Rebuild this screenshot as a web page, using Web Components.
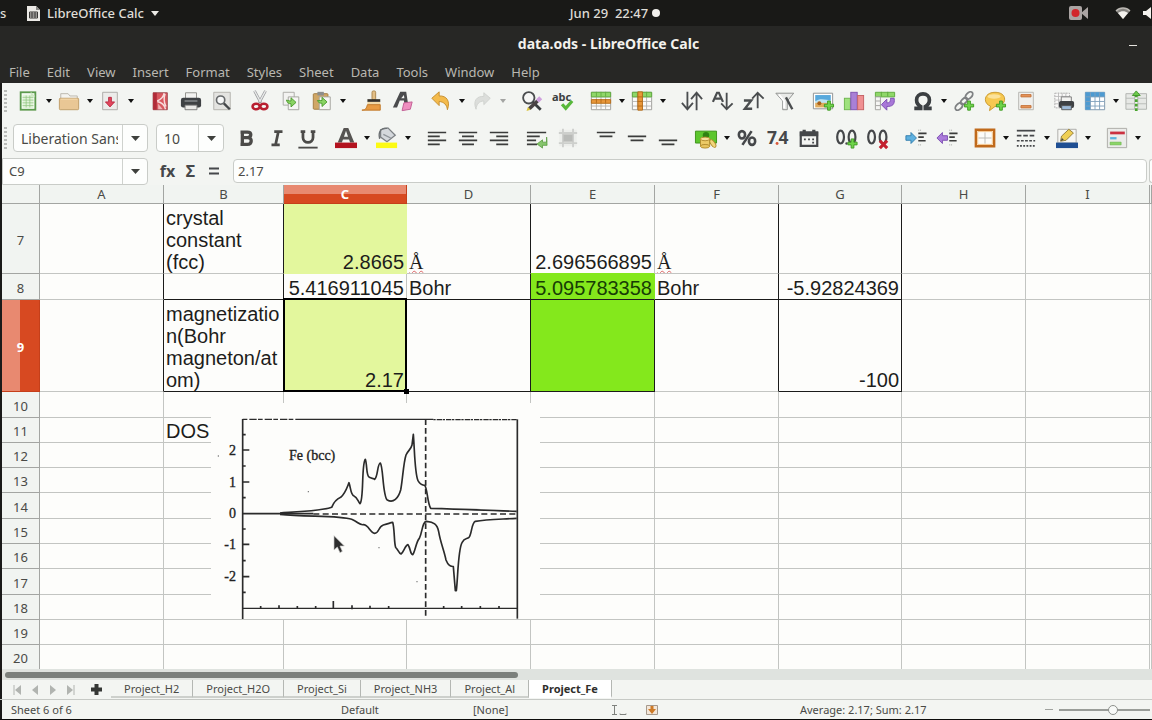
<!DOCTYPE html>
<html lang="en">
<head>
<meta charset="utf-8">
<title>data.ods - LibreOffice Calc</title>
<style>
  html, body { height: 100%; }
  body { margin: 0; overflow: hidden; font-family: "Noto Sans", "Open Sans", sans-serif; font-size: 13px; color: #4a4a46; background: #f3f5f2; }
</style>
</head>
<body>
<calc-window></calc-window>

<script>
/* ---------- icon library, 24 x 24 grid ---------- */
const plus = (x, y) => `<path d="M${x} ${y - 5}h3v3.500h3.500v3h-3.500v3.500h-3v-3.500h-3.500v-3h3.500z" fill="#6fd44a" stroke="#3d9a22"/>`;
const gridLines = (c) => `<path d="M2 7.500h20M2 12.500h20M2 17.500h20M7 2.500v19M12 2.500v19M17 2.500v19" stroke="${c}" fill="none"/>`;
const ICONS = {
  new: `<rect x="4" y="2.500" width="16" height="19" fill="#fff" stroke="#5b9a4c" stroke-width="2"/><rect x="6" y="5" width="12" height="15" fill="#e2f3da"/><path d="M6 8h12M6 11h12M6 14h12M6 17h12M10 6v13M14 6v13" stroke="#8fc47e" stroke-width=".8"/><path d="M15 2l5 5h-5z" fill="#cfe8c6"/>`,
  open: `<path d="M3 4h8l2 2.500h8V19H3z" fill="#f4f4f0" stroke="#b9b5ab"/><rect x="1.500" y="9" width="21" height="12.500" rx="1" fill="#e9c795" stroke="#bd9b66"/><path d="M3 10h18" stroke="#f6dcb0"/>`,
  save: `<path d="M4 2.500h16v19H4z" fill="#ececea" stroke="#aaa9a4"/><path d="M10.500 8h3v5h3.500l-5 5.500L7 13h3.500z" fill="#e2475d" stroke="#b92b42"/>`,
  pdf: `<path d="M4.500 3h15.500v18.500H4.500z" fill="#d9585f" stroke="#9a4a50"/><path d="M4.500 3h4v18.500h-4z" fill="#b02c39"/><path d="M9 12C14 10 16 7 16.500 3.500M9 12.500c5 1 8 4 9 8.500M17.500 4c-2 6-1 10 1 14" fill="none" stroke="#f7dcdc" stroke-width="1.600"/><path d="M10 15l5 6h-5z" fill="#f0b4b7"/>`,
  print: `<path d="M6 3h12v7H6z" fill="#f2f2f0" stroke="#8c8c88"/><rect x="1" y="8.500" width="22" height="10.500" rx="2.500" fill="#3e4144"/><rect x="5" y="11" width="14" height="2" fill="#777b7e"/><path d="M5.500 16.500h13v5h-13z" fill="#e9e9e7" stroke="#777"/>`,
  preview: `<path d="M3 2.500h18v19H3z" fill="#e4e4e1" stroke="#b1b0ab"/><circle cx="10.500" cy="11" r="4.500" fill="#f7f8f8" stroke="#66696b" stroke-width="1.800"/><path d="M14 14.500l6.500 6.500" stroke="#45484a" stroke-width="2.600"/>`,
  cut: `<path d="M6 1l7 13M18 1l-7 13" stroke="#9a9c9e" stroke-width="3"/><path d="M6 1l6.500 12M18 1l-6.500 12" stroke="#e9eaea" stroke-width="1.400"/><ellipse cx="7.800" cy="18" rx="3.900" ry="3" fill="none" stroke="#b81f30" stroke-width="2.800"/><ellipse cx="16.200" cy="18" rx="3.900" ry="3" fill="none" stroke="#b81f30" stroke-width="2.800"/>`,
  copy: `<path d="M3.500 2.500h12v14h-12z" fill="#f3f3f1" stroke="#a9a9a4"/><path d="M9 7.500h11.500v14H9z" fill="#f6f6f4" stroke="#a2a29d"/><path d="M7 11c1 3 2 4 5 4v3.500l5.500-5-5.500-5V12c-3 0-4-1-5-1z" fill="#8ad463" stroke="#4a9a2c"/>`,
  paste: `<rect x="2.500" y="4" width="16" height="17" rx="1" fill="#d0a766" stroke="#a17b3e"/><rect x="7" y="2" width="7" height="4" fill="#8d8e8c"/><path d="M9 7.500h12v14H9z" fill="#f6f6f4" stroke="#a2a29d"/><path d="M7 11.500c1 2 2 3 5 3V18l5.500-5-5.500-5v3.500c-3 0-4 0-5 0z" fill="#8ad463" stroke="#4a9a2c"/>`,
  brush: `<rect x="12" y="1" width="4" height="10" rx="1.500" fill="#e3bf86" stroke="#a8844b"/><path d="M7 10h14v3H7z" fill="#33302b"/><path d="M7 13h14v3H7z" fill="#f0d9a8"/><path d="M7 16h14v6H1c4 0 5-2 6-6z" fill="#e79b43" stroke="#bf7524"/>`,
  clear: `<path d="M1 19L9 2h6.500l2 13h-4l-.500-3.500H8.500L5.500 19zM10 9h3.500L13 5.500z" fill="#4a4b4d"/><path d="M13 14l9-1-2 8-9 1.500z" fill="#ef8fc0" stroke="#bf5b92"/>`,
  undo: `<path d="M2 9l8-7v4.500C18 6 22.500 12 19 21.500 18.500 16 15 13 10 12.500V17z" fill="#f4bb4c" stroke="#c48b2b"/>`,
  redo: `<path d="M21 9l-7-6v4C6 6.500 2 12 5.500 21 6 15.500 9 12 14 12v4z" fill="#dcdedb" stroke="#cfd1ce"/>`,
  find: `<circle cx="8.500" cy="8.500" r="6.200" fill="#f6f7f6" stroke="#4a4d4f" stroke-width="2"/><path d="M13 13l8.500 8.500" stroke="#3a3d3f" stroke-width="3"/><path d="M9 20.500L18 12" stroke="#4a4344" stroke-width="4"/><path d="M18 12l3.500-3.500" stroke="#cfa0dd" stroke-width="4.500"/><path d="M6 23l1.500-4.500 3 3z" fill="#d8c23a"/>`,
  spell: `<text x="0" y="12" font-family="Noto Sans" font-size="12" font-weight="700" fill="#3c3f41">abc</text><path d="M11 15.500l4 4.500 7-8" fill="none" stroke="#58b83a" stroke-width="3.500"/>`,
  row: `<path d="M1.500 2.500h21v19h-21z" fill="#fbfbfa" stroke="#9b9b98"/>${gridLines('#b3b3b0')}<path d="M1.500 2.500h21v5h-21z" fill="#8fd769" stroke="#5aa93a"/><path d="M7 2v5M12 2v5M17 2v5" stroke="#62ae42"/><path d="M1.500 10.500h21v4h-21z" fill="#e8973b" stroke="#b36a16"/><path d="M7 10v4M12 10v4M17 10v4" stroke="#b36a16"/>`,
  col: `<path d="M1.500 2.500h21v19h-21z" fill="#fbfbfa" stroke="#9b9b98"/>${gridLines('#b3b3b0')}<path d="M1.500 2.500h21v5h-21z" fill="#8fd769" stroke="#5aa93a"/><path d="M7 2v5M12 2v5M17 2v5" stroke="#62ae42"/><path d="M7.500 2h5v20h-5z" fill="#e8973b" stroke="#b36a16"/><path d="M7 7.500h5M7 12.500h5M7 17.500h5" stroke="#b36a16"/>`,
  sort: `<g fill="none" stroke="#4a4d4f" stroke-width="2"><path d="M7 2v19M1 14l6 7 6-7M17 22V3M11 10l6-7 6 7"/></g>`,
  asc: `<path d="M1 13L5.500 3h2L12 13M3.500 9.500h6.500" fill="none" stroke="#4a4d4f" stroke-width="2.400"/><path d="M16 3v18M10 14.500l6 6.500 6.500-6.500" fill="none" stroke="#4a4d4f" stroke-width="2"/>`,
  desc: `<path d="M1 11.500h8l-7 9h8" fill="none" stroke="#4a4d4f" stroke-width="2.600"/><path d="M16 20V3M10 9.500L16 3l6.500 6.500" fill="none" stroke="#4a4d4f" stroke-width="2"/>`,
  filter: `<path d="M2 3.500h19.500L14.500 12v9.500h-5V12z" fill="#e9eae8" stroke="#8a8c8b"/><path d="M5.500 5l5.500 7v8" stroke="#fff" stroke-width="2" fill="none"/><path d="M13 8l7 13" stroke="#4a4d4f" stroke-width="2.600"/>`,
  image: `<path d="M1.500 3.500h21v17h-21z" fill="#fff" stroke="#8b8d8c"/><path d="M3.500 5.500h17v7h-17z" fill="#58a9dc"/><path d="M3.500 12.500c5-4 11-2 17-1v3h-17z" fill="#bfe3f2"/><path d="M3.500 14h17v5h-17z" fill="#e0ac5e"/><circle cx="8" cy="14.500" r="2.200" fill="#a8611c"/>${plus(17, 17)}`,
  chart: `<rect x="1.500" y="9" width="6.500" height="12.500" fill="#9fe27e" stroke="#6cb44c"/><rect x="8.500" y="2.500" width="7" height="19" fill="#a980d6" stroke="#7d52ae"/><rect x="16" y="6" width="6.500" height="15.500" fill="#f09092" stroke="#c46063"/>`,
  pivot: `<path d="M1.500 2.500h21v5h-21z" fill="#8fd769" stroke="#5aa93a"/><path d="M1.500 7.500H7v14H1.500z" fill="#f6f6f4" stroke="#a0a09c"/><path d="M2 12h5M2 17h5" stroke="#a0a09c"/><path d="M8 2v5M15 2v5" stroke="#5aa93a"/><path d="M22 9c1 7-2 9-8 9v4l-6-6 6-6v4c3 0 4-1 4-5z" fill="#a878d8" stroke="#7a4bb0"/>`,
  omega: `<path d="M2.500 20h7v-2C6 16 5 13.800 5 10.800 5 7 8 4.200 12 4.200s7 2.800 7 6.600c0 3-1 5.200-4.500 7.200v2h7" fill="none" stroke="#3b3f42" stroke-width="4"/>`,
  link: `<g fill="none" stroke="#7e8183" stroke-width="2"><ellipse cx="6.500" cy="18" rx="3" ry="4.800" transform="rotate(45 6.500 18)"/><ellipse cx="12" cy="12" rx="2.500" ry="4.500" transform="rotate(45 12 12)"/><ellipse cx="17.500" cy="6" rx="3" ry="4.800" transform="rotate(45 17.500 6)"/></g>${plus(16, 17)}`,
  comment: `<path d="M12 2.500c6.500 0 10.500 3 10.500 7.500S18.500 18 12 18l-6 4.500 1-5c-3-1-5.500-3.500-5.500-7C1.500 6 5.500 2.500 12 2.500z" fill="#f6c850" stroke="#c6952b"/><ellipse cx="11" cy="7" rx="7" ry="2.500" fill="#fbe29b"/>${plus(17, 17)}`,
  headers: `<path d="M4 2.500h16v19H4z" fill="#f0f0ee" stroke="#b4b3ae"/><path d="M6.500 5h11v2.500h-11zM6.500 17h11v2.500h-11z" fill="#e8945a" stroke="#c4743c"/>`,
  area: `<path d="M2 3.500h16v16H2z" fill="#fafaf9" stroke="#aaa" stroke-dasharray="2 1"/><path d="M2 7h16M2 11h16M2 15h16M6 3v16M10 3v16M14 3v16" stroke="#bbb"/><path d="M9 7.500h11v6H9z" fill="#f3f3f1" stroke="#777"/><rect x="6.500" y="12" width="16.500" height="7.500" rx="2" fill="#3e4144"/><path d="M9.500 17h10.500v4.500H9.500z" fill="#9dbad8" stroke="#555"/>`,
  freeze: `<path d="M1.500 2.500h21v19h-21z" fill="#fff" stroke="#7a94ab"/><path d="M1.500 2.500h21v5h-21zM1.500 2.500H7v19H1.500z" fill="#4d9bd2"/>${gridLines('#7fa0bb')}`,
  split: `<path d="M1 4h9.500v17H1zM14 4h9.500v17H14z" fill="#e6e8e5" stroke="#aeb1ad"/><path d="M1 9h9.500M14 9h9.500M1 15h9.500M14 15h9.500" stroke="#b7bab6"/><path d="M12.300 5v18" stroke="#4aa530" stroke-width="3" stroke-dasharray="3 2"/><path d="M8 6l4.300-5 4.300 5z" fill="#6cc94c" stroke="#3f952a"/>`,

  bold: `<path d="M6 5.500h7.500c5 0 5 6 0 6H8M8 11.500h6c5 0 5 7.500-.500 7.500H6M8 4.500v15" fill="none" stroke="#4b4a48" stroke-width="3.600"/>`,
  italic: `<path d="M9 5h9M6 19.500h9M13.500 5l-3 14" fill="none" stroke="#4b4a48" stroke-width="3"/>`,
  under: `<path d="M6.500 4v7.500c0 7 11 7 11 0V4M4 5h5M15 5h5" fill="none" stroke="#4b4a48" stroke-width="3"/><path d="M1.500 22.500h21" stroke="#4b4a48" stroke-width="2"/>`,
  color: `<path d="M3 17L9.500 1h5L21 17h-4.500l-1.200-3.500H8.700L7.500 17zM9.800 10.500h4.400L12 4z" fill="#565452"/><path d="M0 17h24v6H0z" fill="#b3131f"/>`,
  bucket: `<path d="M5 3l8-2 8 8-9 7-7-5z" fill="#d4d8dc" stroke="#7c8084" stroke-width="1.400"/><path d="M4 13C2 5 6 0 12 1.500" fill="none" stroke="#6b6f72" stroke-width="1.500"/><path d="M8 8l8 4" stroke="#8f959a" stroke-width="1.500"/><path d="M0 17h23v6H0z" fill="#fcfa14"/>`,
  left: `<path d="M2 6h20M2 10.300h13M2 14.700h20M2 19h13" stroke="#3b3c3b" stroke-width="1.900"/>`,
  center: `<path d="M2 6h20M5.500 10.300h13M2 14.700h20M5.500 19h13" stroke="#3b3c3b" stroke-width="1.900"/>`,
  right: `<path d="M2 6h20M9 10.300h13M2 14.700h20M9 19h13" stroke="#3b3c3b" stroke-width="1.900"/>`,
  wrap: `<path d="M1 6h21M1 10.300h14M1 14.700h10M1 19h11" stroke="#3b3c3b" stroke-width="1.900"/><path d="M22.500 11v5.500H18V14l-6 4.500 6 4.500v-3h5z" fill="#86c56d" stroke="#4f9636" stroke-width=".8"/>`,
  merge: `<path d="M2.500 3h19v18h-19z" fill="#eceeeb"/><path d="M2 6.500h20M2 17.500h20M6.500 2v20M17.500 2v20" stroke="#cdcfcc" stroke-width="2"/><path d="M7 8h10v8H7z" fill="#b9bbb8"/>`,
  top: `<path d="M2 6h20M5 10.300h14" stroke="#3b3c3b" stroke-width="1.900"/>`,
  middle: `<path d="M2 10.300h20M5 14.700h14" stroke="#3b3c3b" stroke-width="1.900"/>`,
  bottom: `<path d="M2 14.700h20M5 19h14" stroke="#3b3c3b" stroke-width="1.900"/>`,
  money: `<path d="M.500 4.500h23v13H.500z" fill="#5cc62d" stroke="#3b8f18"/><circle cx="12" cy="9" r="3.500" fill="#2f8212"/><path d="M6 13h10v8H6z" fill="#ecca66" stroke="#b08a2c"/><ellipse cx="11" cy="21" rx="5" ry="2" fill="#e8c45e" stroke="#b08a2c"/><ellipse cx="11" cy="13" rx="5" ry="2" fill="#f6e09a" stroke="#b08a2c"/><ellipse cx="19.500" cy="18" rx="2.200" ry="4.800" transform="rotate(-35 19.500 18)" fill="#f2d67c" stroke="#b08a2c"/>`,
  percent: `<g fill="none" stroke="#45474a" stroke-width="2.800"><ellipse cx="6.500" cy="8.500" rx="3.400" ry="4"/><ellipse cx="17.500" cy="15.500" rx="3.400" ry="4"/><path d="M17 4.500L7 19.500"/></g>`,
  number: `<text x="0" y="19" font-family="Noto Sans" font-size="19" font-weight="700" fill="#45474a">7</text><circle cx="11" cy="18" r="1.600" fill="#d8583a"/><text x="12.500" y="19" font-family="Noto Sans" font-size="19" font-weight="700" fill="#45474a">4</text>`,
  date: `<path d="M3 6h18v14.500H3z" fill="#f4f5f3" stroke="#45474a" stroke-width="2.400"/><path d="M2 5h20v5H2zM5 3h3.500v3H5zM15.500 3H19v3h-3.500z" fill="#45474a"/><path d="M6.500 13.500h2M11 13.500h2M15.500 13.500h2M15.500 17h2" stroke="#45474a" stroke-width="2"/>`,
  addDec: `<g fill="none" stroke="#45474a" stroke-width="2.400"><ellipse cx="5" cy="11" rx="3.700" ry="7"/><ellipse cx="17.500" cy="11" rx="3.700" ry="7"/></g><circle cx="11.500" cy="18" r="1.300" fill="#45474a"/>${plus(16.500, 18)}`,
  delDec: `<g fill="none" stroke="#45474a" stroke-width="2.400"><ellipse cx="5" cy="11" rx="3.700" ry="7"/><ellipse cx="17.500" cy="11" rx="3.700" ry="7"/></g><path d="M14 15l8 8M22 15l-8 8" stroke="#c4202f" stroke-width="3.400"/>`,
  indent: `<path d="M14.500 7h9M14.500 11h6M14.500 15h8" stroke="#3b3c3b" stroke-width="1.800"/><path d="M14.500 3.500h4M14.500 19.500h4" stroke="#9a9c99" stroke-dasharray="1 1"/><path d="M1 9.500h5.500V6l6 6-6 6v-3.500H1z" fill="#5eb0df" stroke="#2f7dad"/>`,
  outdent: `<path d="M14.500 7h9M14.500 11h6M14.500 15h8" stroke="#3b3c3b" stroke-width="1.800"/><path d="M14.500 3.500h4M14.500 19.500h4" stroke="#9a9c99" stroke-dasharray="1 1"/><path d="M12.500 9.500H7V6l-6 6 6 6v-3.500h5.500z" fill="#ab7bdb" stroke="#7a4bb0"/>`,
  border: `<path d="M2 3h20v18H2z" fill="#fcfcfa" stroke="#c06a1c" stroke-width="2.600"/><path d="M12 6v12M5 12h14" stroke="#b9b9b5"/><path d="M4 5h16v14H4z" fill="none" stroke="#f3bf82" stroke-width="1"/>`,
  style: `<g stroke="#45474a" stroke-width="1.900"><path d="M2 4h20"/><path d="M2 9.500h20" stroke-dasharray="5 2"/><path d="M2 15h20" stroke-dasharray="3 1.500"/><path d="M2 20.500h20" stroke-dasharray="2 1.500"/></g>`,
  line: `<path d="M2 2.500h20v15H2z" fill="#f6f6f3" stroke="#a9a9a5"/><path d="M5 15.500l1-5.500 8-7.500 5 4-8 8z" fill="#efcf54" stroke="#8f7a35"/><path d="M5 15.500l1.500-3.500 2 2z" fill="#4b4a45"/><path d="M0 17h24v6H0z" fill="#1f4f93"/>`,
  cond: `<path d="M1.500 1.500h21v21h-21z" fill="#ebecea" stroke="#a8a8a4"/><path d="M4.500 5h16v3h-16z" fill="#cb3140"/><path d="M4.500 11h7v2.500h-7z" fill="#5eb3de"/><path d="M4.500 16.500h12v3h-12z" fill="#8bd567" stroke="#63b042" stroke-width=".6"/>`,
};

const define = (name, html, setup) => {
  const template = document.createElement('template');
  template.innerHTML = html;
  customElements.define(name, class extends HTMLElement {
    constructor() {
      super();
      this.attachShadow({ mode: 'open' }).append(template.content.cloneNode(true));
    }
    connectedCallback() { if (setup) setup.call(this, this.shadowRoot); }
  });
};

/* ---------- toolbar pieces ---------- */
define('tool-button', `
<style>
  :host { display: flex; flex: none; align-items: center; height: 28px; width: 31px; }
  :host([menu]) { width: 41px; }
  button { display: flex; border: 0; padding: 0; margin: 0; background: none; color: inherit; }
  svg { overflow: visible; }
  .main { width: 31px; height: 28px; align-items: center; justify-content: center; }
  .more { display: none; width: 10px; height: 28px; align-items: center; justify-content: flex-end; padding-right: 1px; }
  :host([menu]) .more { display: flex; }
  :host([disabled]) .more { opacity: .35; }
</style>
<button class="main" type="button"><svg width="22" height="22" viewBox="0 0 24 24" aria-hidden="true"></svg></button>
<button class="more" type="button" aria-label="More"><svg width="6" height="4" viewBox="0 0 6 4"><path d="M0 0h6L3 4z" fill="#111"/></svg></button>`,
function (root) {
  root.querySelector('svg').innerHTML = ICONS[this.getAttribute('icon')] || '';
  root.querySelector('.main').setAttribute('aria-label', this.getAttribute('label') || this.getAttribute('icon'));
});

define('tool-bar', `
<style>
  :host { display: flex; align-items: center; height: 36px; padding-left: 2px; overflow: hidden; }
  .grip { flex: none; width: 3px; height: 22px; margin: 0 5px 0 2px; background: repeating-linear-gradient(#b9bbb8 0 2px, transparent 2px 4px); }
  ::slotted(hr) { flex: none; width: 7px; margin: 0; border: 0; }
  ::slotted(hr.wide) { width: 9px; }
</style>
<span class="grip"></span><slot></slot>`);

define('combo-select', `
<style>
  :host { display: grid; flex: none; width: 135px; height: 28px; margin: 0 8px 0 1px; box-sizing: border-box; border: 1px solid #c9ccc8; border-radius: 4px; background: #fdfefd; font-size: 14px; }
  :host([small]) { width: 68px; margin: 0 6px 0 0; }
  label { display: grid; grid-template-columns: 1fr 25px; align-items: stretch; overflow: hidden; }
  select { grid-area: 1 / 1; appearance: none; border: 0; background: none; font: inherit; color: inherit; padding: 0 4px 0 7px; min-width: 0; width: 100%; overflow: hidden; text-overflow: clip; }
  span { display: flex; align-items: center; justify-content: center; border-left: 1px solid #cfd2ce; pointer-events: none; }
</style>
<label><select></select><span><svg width="9" height="5" viewBox="0 0 9 5"><path d="M0 0h9L4.500 5z" fill="#3e403d"/></svg></span></label>`,
function (root) {
  const select = root.querySelector('select');
  select.setAttribute('aria-label', this.getAttribute('label'));
  select.innerHTML = `<option>${this.getAttribute('value')}</option>`;
});

/* ---------- desktop panel ---------- */
define('desktop-panel', `
<style>
  :host { display: block; height: 26px; background: #191917; color: #dfdcd6; font-weight: 500; overflow: hidden; }
  .bar { display: grid; grid-template-columns: 1fr auto 1fr; align-items: center; width: calc(100% + 78px); height: 26px; }
  .side { display: flex; align-items: center; }
  .act { width: 7px; margin-right: 20px; }
  .app { display: flex; align-items: center; gap: 7px; padding: 0; border: 0; background: none; font: inherit; color: inherit; }
  .clock { display: flex; align-items: center; gap: 4px; white-space: pre; }
  .clock i { width: 8px; height: 8px; border-radius: 50%; background: #f2f0ec; }
  .end { justify-content: flex-end; padding-right: 71px; gap: 12px; }
  .cam { margin-right: 15px; }
</style>
<div class="bar">
  <div class="side">
    <span class="act">s</span>
    <button class="app" type="button">
      <svg width="13" height="15" viewBox="0 0 13 15"><path d="M0 0h9l4 4v11H0z" fill="#eceae6"/><path d="M9 0v4h4z" fill="#8a8986"/><path d="M2.500 6h8v6h-8zM2.500 8h8M2.500 10h8M5 6v6M8 6v6" fill="none" stroke="#3a3937"/></svg>
      <span>LibreOffice Calc</span>
      <svg width="8" height="5" viewBox="0 0 8 5"><path d="M0 0h8L4 5z" fill="#eceae6"/></svg>
    </button>
  </div>
  <div class="clock"><span>Jun 29  22:47</span><i></i></div>
  <div class="side end">
    <svg class="cam" width="19" height="14" viewBox="0 0 19 14"><rect width="13" height="14" rx="2" fill="#aba4a3"/><path d="M12 7l7-6v12z" fill="#aba4a3"/><circle cx="6.500" cy="7" r="4" fill="#d2262b"/></svg>
    <svg width="16" height="13" viewBox="0 0 16 13"><path d="M1 4C5 0 11 0 15 4L8 12z" fill="#85837f"/><path d="M3 6c3-2.500 7-2.500 10 0l-5 6z" fill="#f4f2ee"/><path d="M1 4C5 0 11 0 15 4" fill="none" stroke="#bbb8b3" stroke-width="1.500"/></svg>
    <svg width="16" height="14" viewBox="0 0 16 14"><path d="M0 5h3l5-4v12L3 9H0z" fill="#f4f2ee"/><path d="M10 4c2 2 2 4 0 6" fill="none" stroke="#b5b2ad" stroke-width="2"/></svg>
  </div>
</div>`);

/* ---------- title and menus ---------- */
define('title-bar', `
<style>
  :host { display: block; height: 57px; background: #272725; overflow: hidden; }
  header { position: relative; display: flex; align-items: center; justify-content: center; width: calc(100% + 65px); height: 34px; color: #f3f1ec; font-weight: 700; font-size: 14px; }
  .min { position: absolute; right: 80px; top: 8px; width: 8px; height: 20px; padding: 0; border: 0; background: linear-gradient(#e6e4df, #e6e4df) 0 11px / 8px 1px no-repeat; }
  nav { display: flex; align-items: center; gap: 17px; height: 23px; padding-left: 9px; }
  nav button { padding: 0; border: 0; background: none; font: inherit; color: #b9b7b1; }
</style>
<header><span>data.ods - LibreOffice Calc</span><button class="min" type="button" aria-label="Minimize"></button></header>
<nav></nav>`,
function (root) {
  root.querySelector('nav').innerHTML = ['File', 'Edit', 'View', 'Insert', 'Format', 'Styles', 'Sheet', 'Data', 'Tools', 'Window', 'Help']
    .map(t => `<button type="button">${t}</button>`).join('');
});

/* ---------- formula bar ---------- */
define('formula-bar', `
<style>
  :host { display: flex; align-items: center; height: 28px; padding-left: 2px; box-sizing: border-box; overflow: hidden; }
  input { min-width: 0; border: 0; padding: 0; background: none; font: inherit; color: inherit; outline: 0; }
  .name { display: flex; flex: none; width: 146px; height: 27px; box-sizing: border-box; border: 1px solid #c9ccc8; border-radius: 0 4px 4px 0; background: #fdfefd; }
  .name input { flex: 1; padding-left: 6px; }
  button { display: flex; align-items: center; justify-content: center; border: 0; padding: 0; background: none; color: #45474a; font: inherit; font-weight: 700; }
  .name button { width: 25px; border-left: 1px solid #cfd2ce; }
  .fn { width: 23px; height: 26px; font-size: 16px; }
  .first { margin-left: 8px; }
  .line { flex: 1; height: 22px; margin: 0 2px 0 8px; padding: 0 4px; border: 1px solid #c9ccc8; border-radius: 4px; background: #fdfefd; }
  .end { width: 2px; height: 22px; border: 1px solid #c9ccc8; border-right: 0; border-radius: 4px 0 0 4px; background: #fdfefd; }
</style>
<div class="name"><input aria-label="Name box" value="C9"><button type="button" aria-label="Names"><svg width="9" height="5" viewBox="0 0 9 5"><path d="M0 0h9L4.500 5z" fill="#3e403d"/></svg></button></div>
<button class="fn first" type="button">fx</button>
<button class="fn" type="button">Σ</button>
<button class="fn" type="button" aria-label="Formula"><svg width="10" height="8" viewBox="0 0 10 8"><path d="M0 1.500h10M0 6.500h10" stroke="#45474a" stroke-width="2"/></svg></button>
<input class="line" aria-label="Formula" value="2.17">
<span class="end"></span>`);

/* ---------- density-of-states picture placed on the sheet ---------- */
define('dos-chart', `
<style>
  :host { display: block; width: 329px; height: 216px; background: #fdfdfb; }
  svg { display: block; }
  text { font-family: "Liberation Serif", serif; fill: #222; stroke: #222; stroke-width: 1; }
</style>
<svg width="329" height="216" viewBox="33 9 987 648" role="img" aria-label="Fe (bcc) density of states">
  <g fill="none" stroke="#2b2b2b" stroke-width="5" stroke-linejoin="round">
    <path d="M128 57V657"/>
    <path d="M952 58V656"/>
    <path d="M128 58H300" stroke-dasharray="14 6 22 4" stroke-width="4"/><path d="M300 58H700M128 625H952" stroke-width="4"/><path d="M700 59H952" stroke-dasharray="7 3 16 2" stroke-width="4"/>
    <path d="M128 150h20M128 246h20M128 433h20M128 530h20M128 104h9M128 198h9M128 293h9M128 387h9M128 482h9M128 577h9"/>
    <path d="M182 618v7M237 616v10M292 618v8M347 618v8M400 603v22M456 616v12M510 617v9M566 618v8M731 618v7M785 618v7M841 618v7M897 618v7"/>
    <path d="M677 58V648" stroke-dasharray="17 9"/>
    <path d="M128 341H340"/>
    <path d="M340 342H952" stroke-dasharray="18 10"/>
    <path d="M240 339C300 335 370 332 395 322C402 305 408 298 422 292C436 280 440 265 447 248C452 262 452 285 462 288C472 292 474 305 480 311C492 300 484 190 496 178C502 195 498 228 508 232C515 236 520 234 524 238C534 230 532 190 541 189C550 200 548 290 562 300C580 310 595 295 602 270C608 240 610 190 618 165C625 150 632 150 636 135L640 103C644 150 644 220 654 242C662 256 668 255 674 256C682 262 682 310 692 325C760 327 860 330 950 334"/>
    <path d="M240 343C320 351 420 346 455 358C475 366 478 376 490 374C506 374 510 398 524 400C538 400 534 380 550 375C565 370 572 368 578 367C584 385 582 430 587 442C594 448 596 460 603 462C612 455 615 436 624 434C632 445 630 462 638 464C646 455 648 425 658 415C668 395 666 365 680 364C700 366 712 372 716 395C722 430 732 450 738 480C745 498 752 498 760 500L766 572H769C774 530 774 450 786 428C794 412 800 418 807 412C816 400 814 370 826 364C860 358 900 358 950 355"/>
  </g>
  <g font-size="42">
    <text x="267" y="181">Fe (bcc)</text>
    <text x="108" y="166" text-anchor="end">2</text>
    <text x="108" y="260" text-anchor="end">1</text>
    <text x="108" y="355" text-anchor="end">0</text>
    <text x="108" y="448" text-anchor="end">-1</text>
    <text x="108" y="544" text-anchor="end">-2</text>
  </g>
  <g fill="#666"><circle cx="55" cy="168" r="2"/><circle cx="325" cy="275" r="2"/><circle cx="537" cy="443" r="2"/><circle cx="651" cy="545" r="2"/></g>
  <path d="M402 407V450L412 441L420 458L427 454L420 438H433Z" fill="#2e2e2e" stroke="#c9c9c7" stroke-width="2"/>
</svg>`);

/* ---------- sheet ---------- */
define('sheet-grid', `
<style>
  :host { display: block; position: relative; min-height: 0; overflow: hidden; padding-left: 2px; background: #fdfdfb; }
  table { width: 100%; table-layout: fixed; border-collapse: separate; border-spacing: 0; }
  th, td { box-sizing: border-box; padding: 0 1px; border: 0 solid #c3c5c2; border-width: 0 1px 1px 0; white-space: nowrap; }
  th { padding: 0; background: #f1f4f1; font-weight: 400; line-height: 16px; text-align: center; border-color: #a3a5a2; }
  thead th { height: 19px; }
  tbody th { padding-top: 2px; }
  td { font-family: "Liberation Sans", Arial, sans-serif; font-size: 20px; line-height: 22px; color: #1d1d1b; vertical-align: bottom; padding-left: 2px; overflow: hidden; }
  thead .on { color: #fff; font-weight: 700; border-color: #c53f1a; background: linear-gradient(#e88970 50%, #d74921 50%); }
  tbody .on { color: #fff; font-weight: 700; border-color: #c53f1a; background: linear-gradient(90deg, #e88970 50%, #d74921 50%); }
  .n { text-align: right; padding: 0 2px 0 0; }
  .r { border-right-color: #1b1b1a; }
  .b { border-bottom-color: #1b1b1a; }
  .lime { background: #e3f79d; }
  .open { border-color: #e3f79d; }
  .green { background: #84e81c; color: #173d05; }
  .g8 { border-right-color: #84e81c; }
  .cover { border-bottom-color: #84e81c; }
  .sp { font-family: "Liberation Serif", serif; text-decoration: underline wavy #d66 1px; text-underline-offset: 1px; }
  .cursor { position: relative; overflow: visible; }
  .cursor::after { content: ""; position: absolute; inset: -2px -1px -1px -1px; border: 2px solid #000; pointer-events: none; }
  .cursor::before { content: ""; position: absolute; right: -3px; bottom: -3px; width: 5px; height: 5px; background: #000; }
  dos-chart { position: absolute; left: 211px; top: 218px; }
</style>
<table>
  <colgroup></colgroup>
  <thead><tr></tr></thead>
  <tbody></tbody>
</table>
<dos-chart></dos-chart>`,
function (root) {
  const widths = [38, 124, 120, 123, 124, 124, 124, 123, 124, 124, 0];
  root.querySelector('colgroup').innerHTML = widths.map(w => w ? `<col style="width:${w}px">` : '<col>').join('');
  root.querySelector('thead tr').innerHTML = ['', ...'ABCDEFGHI', ''].map(c => `<th${c === 'C' ? ' class="on"' : ''}>${c}</th>`).join('');
  const heights = { 7: 70, 8: 26, 9: 92, 10: 26, 11: 25, 12: 25, 13: 25, 14: 26, 15: 25, 16: 25, 17: 26, 18: 25, 19: 25, 20: 25 };
  const cells = {
    A7: ['r'], B7: ['r', 'crystal<br>constant<br>(fcc)'], C7: ['n lime open', '2.8665'], D7: ['r', '<span class="sp">Å</span>'],
    E7: ['n cover', '2.696566895'], F7: ['r', '<span class="sp">Å</span>'], G7: ['r'],
    A8: ['r'], B8: ['r b'], C8: ['n b', '5.416911045'], D8: ['r b', 'Bohr'], E8: ['n b green g8', '5.095783358'], F8: ['r b', 'Bohr'], G8: ['n r b', '-5.92824369'],
    A9: ['r'], B9: ['r b', 'magnetizatio<br>n(Bohr<br>magneton/at<br>om)'], C9: ['n lime cursor', '2.17'], D9: ['r b'], E9: ['green r b'], F9: ['r'], G9: ['n r b', '-100'],
    B11: ['', 'DOS'],
  };
  root.querySelector('tbody').innerHTML = Object.entries(heights).map(([n, h]) =>
    `<tr style="height:${h}px"><th${n === '9' ? ' class="on"' : ''}>${n}</th>` +
    [...'ABCDEFGHIJ'].map(c => { const [k = '', t = ''] = cells[c + n] || []; return `<td class="${k}">${t}</td>`; }).join('') + '</tr>').join('');
});

/* ---------- sheet tabs with scrollbar ---------- */
define('sheet-tabs', `
<style>
  :host { display: block; padding-left: 2px; border-bottom: 1px solid #c6c9c5; font-size: 11px; }
  .scroll { height: 11px; background: #dfe3df; overflow: hidden; }
  .scroll i { display: block; width: 45%; max-width: 513px; height: 6px; margin: 3px 0 0 3px; border-radius: 3px; background: #7b807c; }
  .row { display: flex; align-items: stretch; height: 19px; }
  .nav { display: flex; align-items: center; gap: 10px; padding: 0 16px 0 11px; }
  button { display: flex; align-items: center; border: 0; padding: 0; background: none; font: inherit; color: inherit; }
  .add { margin-right: 9px; }
  .tab { box-sizing: border-box; height: 18px; padding: 1px 13px 0; border-right: 1px solid #b4b7b3; border-bottom: 2px solid #cdd0cc; }
  .tab.on { font-weight: 700; background: #fff; color: #2f2f2c; border-bottom-color: #fff; }
</style>
<div class="scroll"><i></i></div>
<div class="row">
  <div class="nav">
    <button type="button" aria-label="First"><svg width="8" height="10" viewBox="0 0 8 10"><path d="M1 0v10" stroke="#b1b4b0"/><path d="M8 0v10L2 5z" fill="#b1b4b0"/></svg></button>
    <button type="button" aria-label="Previous"><svg width="8" height="10" viewBox="0 0 8 10"><path d="M7 0v10L1 5z" fill="#b1b4b0"/></svg></button>
    <button type="button" aria-label="Next"><svg width="8" height="10" viewBox="0 0 8 10"><path d="M1 0v10l6-5z" fill="#b1b4b0"/></svg></button>
    <button type="button" aria-label="Last"><svg width="8" height="10" viewBox="0 0 8 10"><path d="M7 0v10" stroke="#b1b4b0"/><path d="M0 0v10l6-5z" fill="#b1b4b0"/></svg></button>
  </div>
  <button class="add" type="button" aria-label="Add sheet"><svg width="11" height="11" viewBox="0 0 11 11"><path d="M5.500 0v11M0 5.500h11" stroke="#353735" stroke-width="4"/></svg></button>
</div>`,
function (root) {
  const row = root.querySelector('.row');
  ['Project_H2', 'Project_H2O', 'Project_Si', 'Project_NH3', 'Project_Al', 'Project_Fe'].forEach((t, i) => {
    row.insertAdjacentHTML('beforeend', `<button type="button" class="tab${i === 5 ? ' on' : ''}">${t}</button>`);
  });
});

/* ---------- status bar ---------- */
define('status-bar', `
<style>
  :host { display: grid; grid-template-columns: 330fr 132fr 139fr 34fr 154fr 245fr 107fr; align-items: center; height: 19px; padding-left: 11px; border-bottom: 1px solid #0c0c0b; font-size: 11px; line-height: 18px; white-space: nowrap; overflow: hidden; }
  span { min-width: 0; }
  svg { display: block; }
  .zoom { display: flex; align-items: center; gap: 6px; min-width: 0; overflow: hidden; padding-right: 2px; }
  .zoom i { flex: none; width: 8px; height: 1px; background: #a0a39f; }
  input { appearance: none; flex: 1; width: 0; min-width: 0; height: 12px; margin: 0; background: linear-gradient(#9a9d99, #9a9d99) 0 5px / 100% 2px no-repeat; }
  input::-webkit-slider-thumb { appearance: none; width: 10px; height: 10px; box-sizing: border-box; border: 1px solid #8d908c; border-radius: 50%; background: #f8faf8; }
</style>
<span>Sheet 6 of 6</span><span>Default</span><span>[None]</span>
<svg width="16" height="12" viewBox="0 0 16 12"><path d="M0 1.500h5M2.500 1.500v9M0 10.500h5M8 9.500v1h6v-1" fill="none" stroke="#7f827e"/></svg>
<svg width="12" height="10" viewBox="0 0 12 10"><path d="M.500.500h11v9H.500z" fill="#f3e6d8" stroke="#a5998c"/><path d="M4.500 1h3v3H10L6 9 2 4h2.500z" fill="#cd7a26"/></svg>
<span>Average: 2.17; Sum: 2.17</span>
<div class="zoom"><i></i><input type="range" aria-label="Zoom" min="0" max="100" value="61"></div>`);

/* ---------- window ---------- */
define('calc-window', `
<style>
  :host { display: grid; grid-template-rows: auto auto auto auto auto 1fr auto auto; height: 100vh; min-width: 0; background: #f3f5f2; }
  :host > * { min-width: 0; }
  tool-bar, formula-bar, sheet-grid, sheet-tabs, status-bar { min-width: 0; box-shadow: inset 2px 0 #1a1a19; }
  .fmt { height: 38px; }
</style>
<desktop-panel></desktop-panel>
<title-bar></title-bar>
<tool-bar class="std"></tool-bar>
<tool-bar class="fmt"></tool-bar>
<formula-bar></formula-bar>
<sheet-grid></sheet-grid>
<sheet-tabs></sheet-tabs>
<status-bar></status-bar>`,
function (root) {
  /* "*" marks a button with a drop-down; "|" separates groups */
  const build = (list) => {
    let last = '';
    return list.split(' ').map(k => {
      if (k === '|') return `<hr${last.endsWith('*') ? ' class="wide"' : ''}>`;
      last = k;
      const name = k.replace('*', '');
      return `<tool-button icon="${name}"${k.endsWith('*') ? ' menu' : ''}${name === 'redo' ? ' disabled' : ''}></tool-button>`;
    }).join('');
  };
  root.querySelector('.std').innerHTML = build('new* open* save* | pdf print preview | cut copy paste* | brush clear | undo* redo* | find spell | row* col* | sort asc desc filter | image chart pivot | omega* link comment headers | area freeze* split');
  root.querySelector('.fmt').innerHTML = '<combo-select label="Font name" value="Liberation Sans"></combo-select><combo-select small label="Font size" value="10"></combo-select>' +
    build('bold italic under | color* bucket* | left center right | wrap merge | top middle bottom | money* percent number date | addDec delDec | indent outdent | border* style* line* | cond*');
});
</script>
</body>
</html>
